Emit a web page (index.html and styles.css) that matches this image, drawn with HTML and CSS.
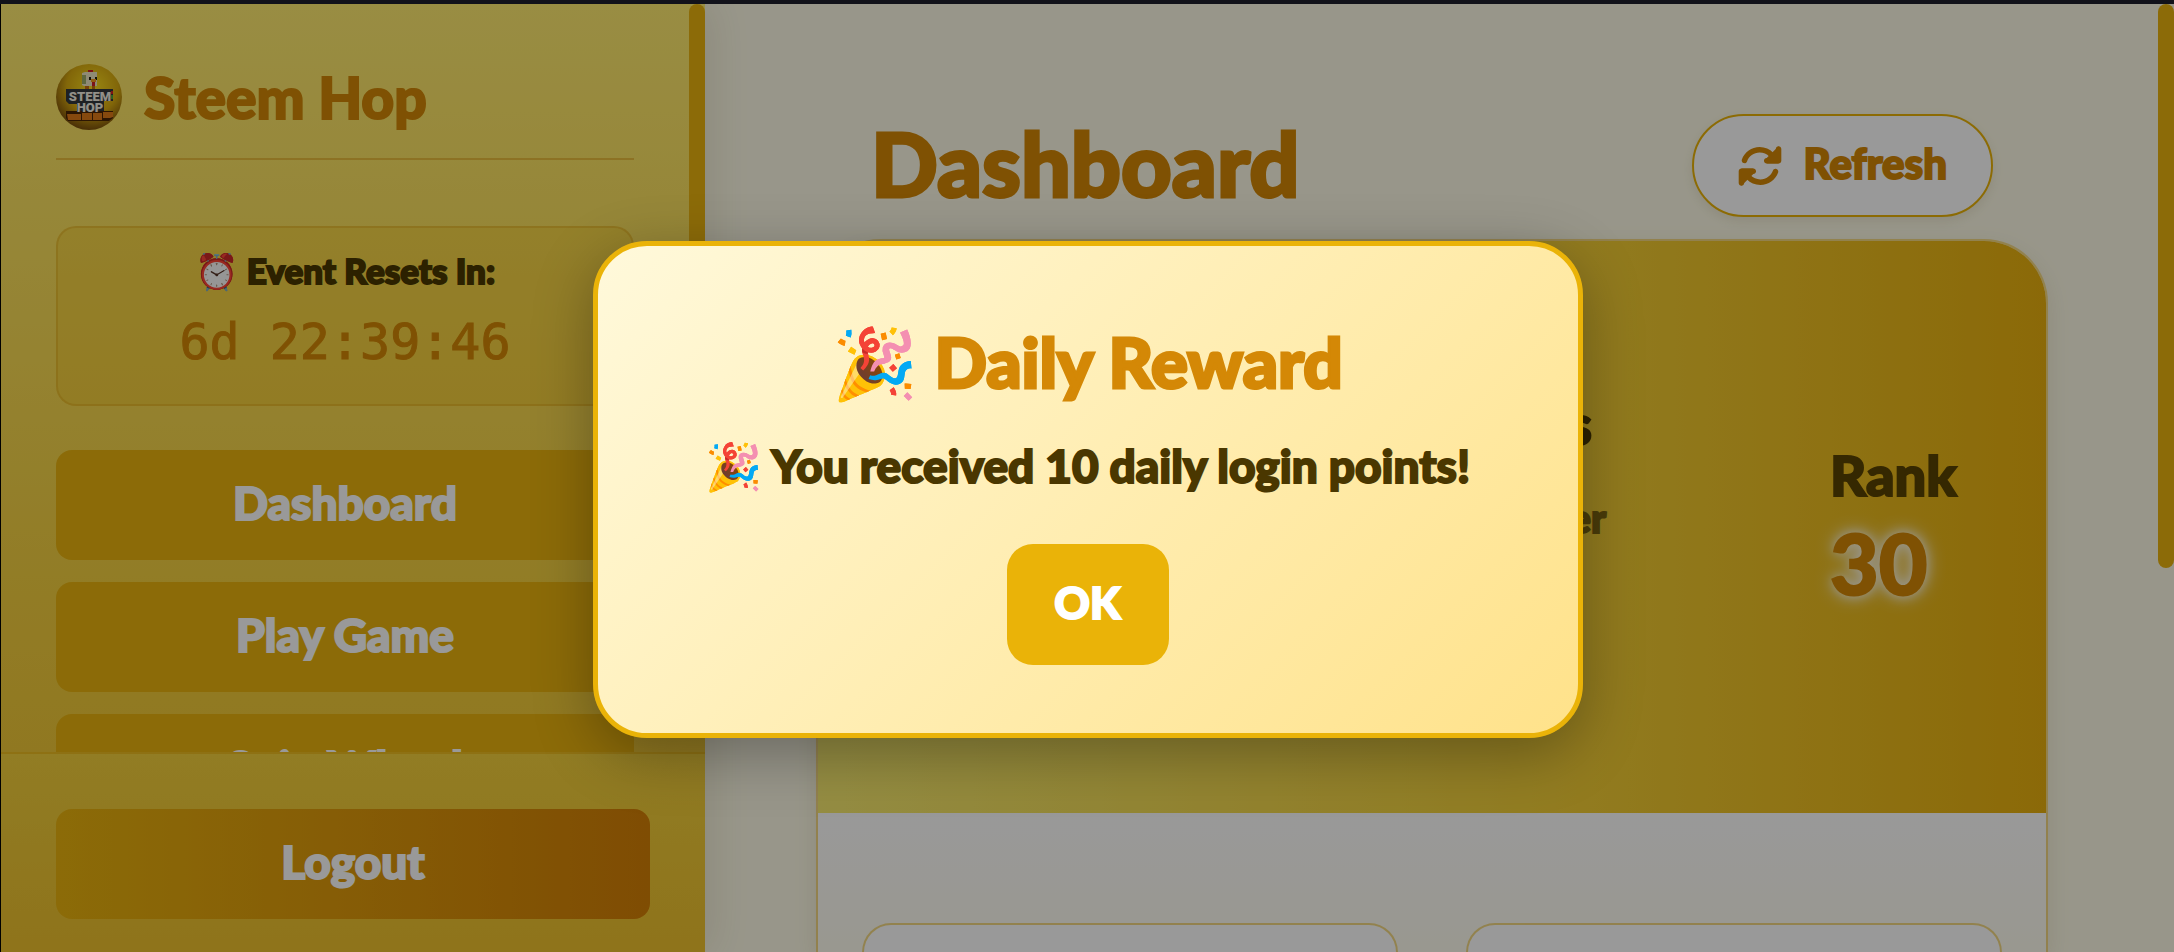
FILE: index.html
```html
<!DOCTYPE html>
<html lang="en">

<head>
<meta charset="utf-8">
<title>Steem Hop</title>
<link rel="stylesheet" href="styles.css">
</head>

<body>

<div class="app">

	<aside class="sidebar">
		<div class="sidebar-scroll">
			<div class="brand">
				<svg class="brand-logo" viewBox="0 0 66 66">
					<defs>
						<radialGradient id="egg" cx="55%" cy="35%" r="65%">
							<stop offset="0" stop-color="#ffe21f"/>
							<stop offset="0.6" stop-color="#d9ab10"/>
							<stop offset="1" stop-color="#7d520c"/>
						</radialGradient>
					</defs>
					<circle cx="33" cy="33" r="33" fill="url(#egg)"/>
					<path d="M32 6h5v4h-5z" fill="#d32026"/>
					<path d="M26 9l3-1h12v14H28l-2-1z" fill="#efe6c4"/>
					<path d="M26 11h4v9h-4z" fill="#9fae6a"/>
					<path d="M33 13h2v3h-2zM39 13h2v3h-2z" fill="#221"/>
					<path d="M35 15h5v3h-5z" fill="#f59a1b"/>
					<path d="M36 18h3v4h-3z" fill="#d32026"/>
					<path d="M29 22h4v4h-4zM36 22h3v4h-3z" fill="#c86d12"/>
					<path d="M10 25h47v12h-9v12H21v-9H13l-3-3z" fill="#33383c"/>
					<path d="M55 27h2v3h-2z" fill="#d32026"/>
					<path d="M55 31h2v4h-2z" fill="#49a33a"/>
					<path d="M10 47h47v7l-4 3H12l-2-3z" fill="#4a2506"/>
					<path d="M11 50h14v6H12zM26 49h10v7H26zM37 49h9v7h-9zM47 48h10v5l-3 1h-7z" fill="#e07a18"/>
					<text x="34" y="37" class="logo-text">STEEM</text>
					<text x="34" y="48" class="logo-text">HOP</text>
				</svg>
				<span class="brand-name">Steem Hop</span>
			</div>

			<div class="timer">
				<div class="timer-label">⏰ Event Resets In:</div>
				<div class="timer-value">6d 22:39:46</div>
			</div>

			<nav class="nav">
				<button class="nav-button">Dashboard</button>
				<button class="nav-button">Play Game</button>
				<button class="nav-button">Spin Wheel</button>
			</nav>
		</div>
		<div class="scroll-thumb sidebar-thumb"></div>

		<div class="sidebar-footer">
			<button class="nav-button logout">Logout</button>
		</div>
	</aside>

	<main class="main">
		<header class="main-header">
			<h1 class="page-title">Dashboard</h1>
			<button class="refresh">
				<svg class="refresh-icon" viewBox="0 0 512 512" fill="currentColor">
					<path d="M105 203C126 143 184 100 252 100c44 0 84 18 113 47l17 17h-48c-18 0-32 14-32 32s14 32 32 32h138c18 0 32-14 32-32V58c0-18-14-32-32-32s-32 14-32 32v62l-30-18C370 60 314 36 252 36 157 36 76 96 45 181c-6 17 3 35 20 41s35-3 40-19z"/>
					<path d="M334 164l138-138v202H334zM178 348L40 486V284h138z"/>
					<path d="M407 309c-21 60-79 103-147 103-44 0-84-18-113-47l-17-17h48c18 0 32-14 32-32s-14-32-32-32H40c-18 0-32 14-32 32v138c0 18 14 32 32 32s32-14 32-32v-62l30 18c40 42 96 66 158 66 95 0 176-60 207-145 6-17-3-35-20-41s-35 3-40 19z"/>
				</svg>
				<span>Refresh</span>
			</button>
		</header>

		<section class="profile">
			<div class="profile-banner">
				<div class="profile-user">
					<div class="profile-name">Points</div>
					<div class="profile-role">Player</div>
				</div>
				<div class="profile-rank">
					<div class="rank-label">Rank</div>
					<div class="rank-value">30</div>
				</div>
			</div>
			<div class="stats">
				<div class="stat-card"></div>
				<div class="stat-card"></div>
			</div>
		</section>
	</main>
	<div class="scroll-thumb page-thumb"></div>

	<div class="overlay">
		<div class="modal" role="dialog" aria-labelledby="reward-title">
			<h2 class="modal-title" id="reward-title">🎉 Daily Reward</h2>
			<p class="modal-text">🎉 You received 10 daily login points!</p>
			<button class="modal-button">OK</button>
		</div>
	</div>

</div>

</body>

</html>
```
FILE: styles.css
```css
* {
	box-sizing: border-box;
}

html, body {
	margin: 0;
	padding: 0;
}

body {
	background: #12121a;
	color: #4a3700;
	font-family: "Fredoka One", Lato, "Noto Color Emoji", sans-serif;
	font-weight: 900;
	-webkit-text-stroke: 2px currentColor;
	stroke-linejoin: round;
}

button {
	font: inherit;
	-webkit-text-stroke: inherit;
	border: 0;
	cursor: pointer;
}

.app {
	position: relative;
	display: flex;
	height: calc(100vh - 4px);
	margin-top: 4px;
	border-left: 1px solid #000;
	overflow: hidden;
	background: #fefbe6;
}

/* sidebar */

.sidebar {
	position: relative;
	flex: 0 0 704px;
	display: flex;
	flex-direction: column;
	background: linear-gradient(180deg, #ffeb70, #f4d040 60%, #eec12d);
	box-shadow: 4px 0 40px rgba(74, 55, 0, 0.12);
}

.sidebar-scroll {
	flex: 1;
	min-height: 0;
	overflow: hidden;
	padding: 56px 71px 0 55px;
}

.brand {
	display: flex;
	align-items: center;
	gap: 22px;
	height: 100px;
	padding-bottom: 24px;
	margin-bottom: 66px;
	border-bottom: 2px solid rgba(212, 136, 6, 0.4);
}

.brand-logo {
	width: 66px;
	height: 66px;
}

.logo-text {
	font-family: "Roboto", sans-serif;
	font-size: 13px;
	fill: #f4f0e4;
	text-anchor: middle;
	-webkit-text-stroke: 0;
}

.brand-name {
	color: #d48806;
	font-size: 57px;
	line-height: 76px;
}

.timer {
	height: 180px;
	margin-bottom: 44px;
	padding: 20px;
	border: 2px solid rgba(212, 150, 6, 0.3);
	border-radius: 20px;
	background: rgba(234, 179, 8, 0.25);
	text-align: center;
}

.timer-label {
	font-size: 35px;
	line-height: 44px;
}

.timer-value {
	margin-top: 22px;
	color: #d48806;
	font-family: "DejaVu Sans Mono", monospace;
	font-size: 50px;
	font-weight: 400;
	line-height: 56px;
	-webkit-text-stroke-width: 1px;
}

.nav {
	display: flex;
	flex-direction: column;
	gap: 22px;
}

.nav-button {
	flex: none;
	width: 100%;
	height: 110px;
	padding: 0 0 6px;
	border-radius: 16px;
	background: #e9b30e;
	color: #fff;
	font-size: 46px;
}

.sidebar-footer {
	height: 200px;
	padding: 55px;
	border-top: 2px solid rgba(234, 179, 8, 0.3);
	background: linear-gradient(180deg, #f3d03c, #eec12d);
}

.logout {
	background: linear-gradient(90deg, #e9b30e, #d48006);
}

.scroll-thumb {
	position: absolute;
	top: 0;
	right: 0;
	width: 16px;
	border-radius: 8px;
	background: #e9b30e;
}

.sidebar-thumb {
	height: 480px;
}

.page-thumb {
	height: 564px;
}

/* main */

.main {
	flex: 1;
	display: flex;
	flex-direction: column;
	padding: 110px 126px 0 111px;
}

.main-header {
	display: flex;
	align-items: center;
	justify-content: space-between;
	height: 103px;
	margin-bottom: 22px;
	padding: 0 55px;
}

.page-title {
	margin: 0;
	padding-bottom: 6px;
	color: #d48806;
	font-size: 88px;
	font-weight: 900;
	line-height: 100px;
	-webkit-text-stroke-width: 3px;
}

.refresh {
	display: flex;
	align-items: center;
	gap: 22px;
	height: 103px;
	padding: 0 44px;
	border: 2px solid #eab308;
	border-radius: 52px;
	background: #fff;
	box-shadow: 0 4px 12px rgba(74, 55, 0, 0.1);
	color: #d48806;
	font-size: 42px;
}

.refresh span {
	padding-bottom: 6px;
}

.refresh-icon {
	width: 44px;
	height: 44px;
}

.profile {
	flex: 1;
	display: flex;
	flex-direction: column;
	overflow: hidden;
	border: 2px solid rgba(234, 179, 8, 0.5);
	border-bottom: 0;
	border-radius: 64px 64px 0 0;
	background: #fff;
	box-shadow: 0 8px 24px rgba(74, 55, 0, 0.1);
}

.profile-banner {
	display: flex;
	align-items: center;
	justify-content: flex-end;
	height: 572px;
	padding: 0 88px;
	background: linear-gradient(90deg, #f8ec70, #f3ce35 62%, #e8b00e);
}

.profile-user {
	margin-right: 224px;
	padding-bottom: 116px;
	text-align: right;
}

.profile-name {
	padding-right: 14px;
	font-size: 56px;
	line-height: 56px;
}

.profile-role {
	margin-top: 42px;
	font-size: 40px;
	line-height: 48px;
	opacity: 0.7;
}

.profile-rank {
	width: 128px;
}

.rank-label {
	font-size: 56px;
	line-height: 68px;
	opacity: 0.9;
}

.rank-value {
	margin-top: 4px;
	color: #d48806;
	font-size: 84px;
	line-height: 100px;
	text-shadow: 0 0 20px #fff, 0 0 12px #fff;
}

.stats {
	flex: 1;
	display: grid;
	grid-template-columns: 1fr 1fr;
	gap: 68px;
	padding: 110px 44px 0;
	background: linear-gradient(180deg, #fff, #fffdf0);
}

.stat-card {
	border: 2px solid rgba(234, 179, 8, 0.5);
	border-bottom: 0;
	border-radius: 44px 44px 0 0;
	background: #fff;
}

/* daily reward dialog */

.overlay {
	position: absolute;
	inset: 0;
	display: flex;
	align-items: center;
	justify-content: center;
	padding-top: 22px;
	background: rgba(0, 0, 0, 0.4);
}

.modal {
	width: 990px;
	padding: 74px 60px 68px;
	border: 5px solid #eab308;
	border-radius: 54px;
	background: linear-gradient(135deg, #fff9db, #ffe28a);
	box-shadow: 0 16px 60px rgba(0, 0, 0, 0.3);
	text-align: center;
}

.modal-title {
	margin: 0 0 28px;
	color: #d48806;
	font-size: 69px;
	font-weight: 900;
	line-height: 84px;
	-webkit-text-stroke-width: 3px;
}

.modal-text {
	margin: 0 0 44px;
	font-size: 46px;
	line-height: 68px;
}

.modal-button {
	width: 162px;
	height: 121px;
	padding: 0 0 4px;
	border-radius: 26px;
	background: #eab308;
	color: #fff;
	font-size: 44px;
}
```
